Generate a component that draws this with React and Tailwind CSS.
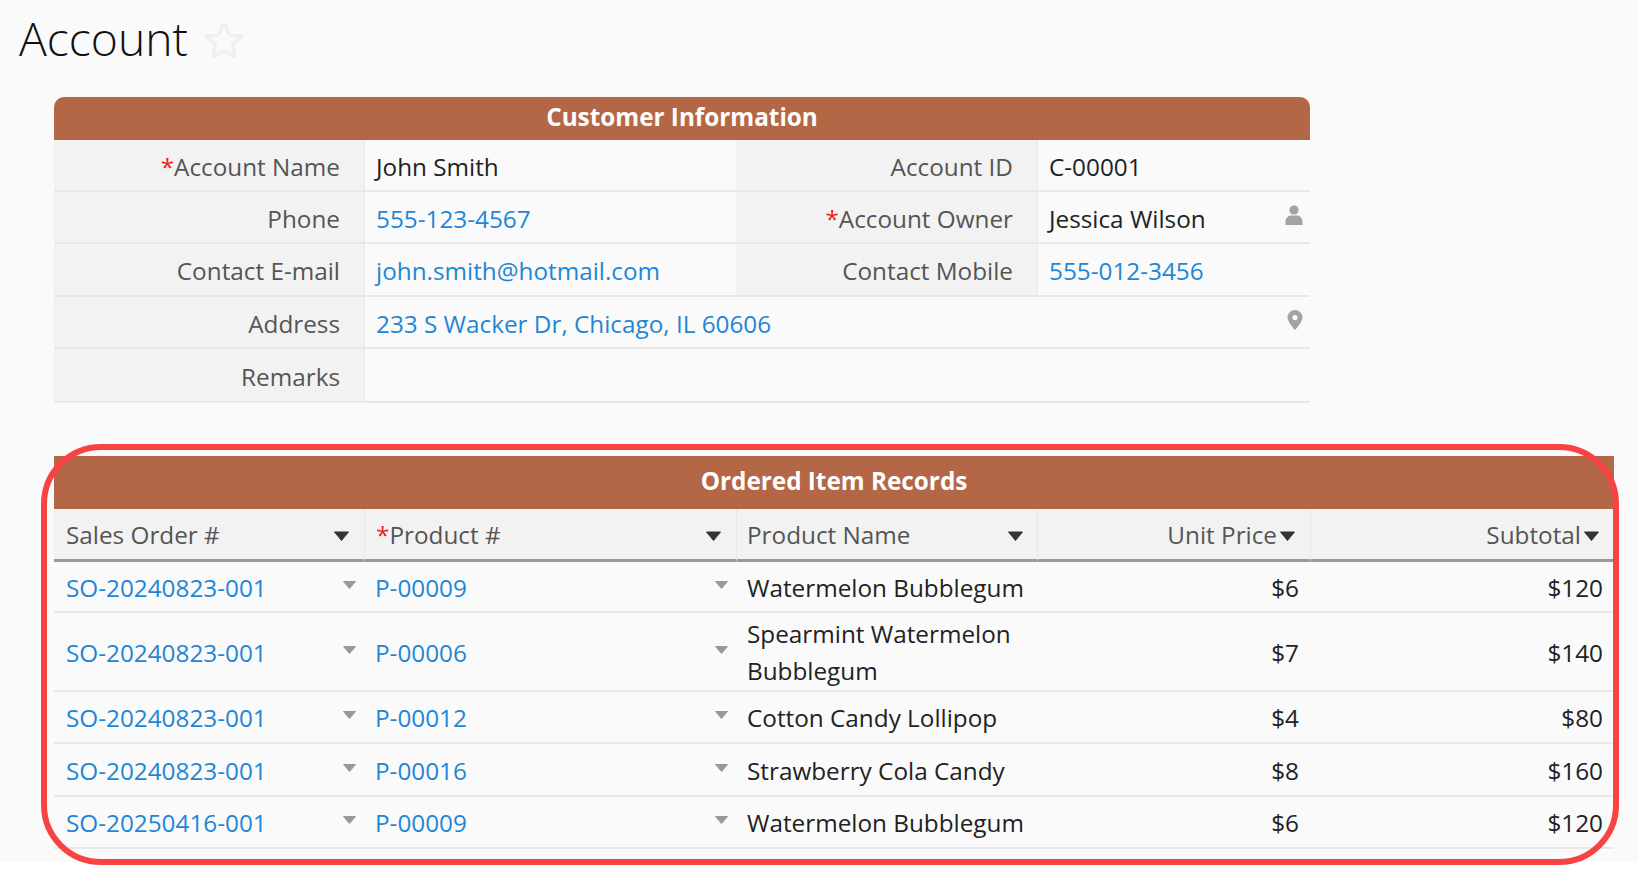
const F = "font-['Open_Sans',sans-serif]";

function Star() {
  return (
    <svg width="44" height="44" viewBox="0 0 24 24" fill="none" stroke="#efefef" strokeWidth="1.7" strokeLinejoin="round">
      <path d="M12 2.500l2.900 6.200 6.700.8-5 4.600 1.400 6.700-6-3.400-6 3.400 1.400-6.700-5-4.600 6.700-.8z" />
    </svg>
  );
}
function Person() {
  return (
    <svg width="18" height="20" viewBox="0 0 18 20" fill="#a3a3a3">
      <circle cx="9" cy="5" r="4.6" />
      <path d="M0.500 20v-3.500c0-3.600 3-6 5.500-6h6c2.500 0 5.500 2.400 5.500 6V20z" />
    </svg>
  );
}
function Pin() {
  return (
    <svg width="16" height="20" viewBox="0 0 16 20">
      <path fillRule="evenodd" fill="#a3a3a3" d="M8 0a7.500 7.500 0 0 0-7.500 7.500C.5 12 8 20 8 20s7.500-8 7.500-12.500A7.500 7.500 0 0 0 8 0zm0 5a2.600 2.600 0 1 1 0 5.200A2.600 2.600 0 0 1 8 5z" />
    </svg>
  );
}
function Caret({ dark }) {
  return dark ? (
    <svg width="15" height="10" viewBox="0 0 15 10" className="shrink-0"><path d="M0.500 1h14L7.500 9.500z" fill="#333" stroke="#333" strokeLinejoin="round" /></svg>
  ) : (
    <svg width="13" height="8" viewBox="0 0 13 8" className="shrink-0"><path d="M0.500 0.500h12L6.500 7.500z" fill="#999" stroke="#999" strokeLinejoin="round" /></svg>
  );
}

const Req = () => <span className="text-[#f01c1c]">*</span>;

function Label({ children }) {
  return (
    <div className="bg-[#f2f2f2] text-[#555] text-right pr-6 pt-[2px] flex items-center justify-end border-b-2 border-[#e8e8e8]">
      <span>{children}</span>
    </div>
  );
}
function Value({ children, link, span, icon }) {
  return (
    <div className={`relative flex items-center pl-[11px] pr-2 pt-[2px] border-b-2 border-l border-[#e8e8e8] ${link ? "text-[#1f86d6]" : "text-[#222]"} ${span ? "col-span-3" : ""}`}>
      <span>{children}</span>
      {icon && <span className="absolute right-[7px] top-[13px] flex">{icon}</span>}
    </div>
  );
}

const rows = [
  ["SO-20240823-001", "P-00009", ["Watermelon Bubblegum"], "$6", "$120", "h-[51px]"],
  ["SO-20240823-001", "P-00006", ["Spearmint Watermelon", "Bubblegum"], "$7", "$140", "h-[79px]"],
  ["SO-20240823-001", "P-00012", ["Cotton Candy Lollipop"], "$4", "$80", "h-[52px]"],
  ["SO-20240823-001", "P-00016", ["Strawberry Cola Candy"], "$8", "$160", "h-[53px]"],
  ["SO-20250416-001", "P-00009", ["Watermelon Bubblegum"], "$6", "$120", "h-[52px]"],
];

const cols = "grid grid-cols-[310px_372px_301px_273px_304px]";

function Head({ children, right, pad }) {
  return (
    <div className={`bg-[#f2f2f2] border-l border-[#e6e6e6] first:border-l-0 border-b-[3px] border-b-[#999] flex items-center text-[#555] ${right ? "justify-end pr-[15px] gap-[3px]" : `justify-between ${pad}`}`}>
      <span>{children}</span>
      <span className="mt-[4px] flex"><Caret dark /></span>
    </div>
  );
}

function LinkCell({ children, pad }) {
  return (
    <div className={`relative flex items-center pt-[1px] ${pad} text-[#1f86d6]`}>
      <span>{children}</span>
      <span className="absolute right-[8px] top-1/2 -translate-y-[calc(50%+2px)] flex"><Caret /></span>
    </div>
  );
}

export default function App() {
  return (
    <div className={`relative w-full h-[881px] bg-white overflow-hidden ${F} text-[24.3px] leading-[37px]`}>
      <div className="h-[862px] bg-[#fafafa]">
        <div className="h-[97px] pl-[19px] pt-[9px] flex items-start">
          <h1 className="text-[46.300px] leading-[60px] font-light text-[#111]">Account</h1>
          <span className="ml-[14px] mt-[10px] flex"><Star /></span>
        </div>

        <div className="ml-[54px] w-[1256px]">
          <div className="h-[43px] pb-[4px] bg-[#b46746] rounded-t-[10px] text-white font-bold flex items-center justify-center">Customer Information</div>
          <div className="grid grid-cols-[310px_372px_301px_273px] grid-rows-[52px_52px_53px_52px_54px]">
            <Label><Req />Account Name</Label>
            <Value>John Smith</Value>
            <Label>Account ID</Label>
            <Value>C-00001</Value>
            <Label>Phone</Label>
            <Value link>555-123-4567</Value>
            <Label><Req />Account Owner</Label>
            <Value icon={<Person />}>Jessica Wilson</Value>
            <Label>Contact E-mail</Label>
            <Value link>john.smith@hotmail.com</Value>
            <Label>Contact Mobile</Label>
            <Value link>555-012-3456</Value>
            <Label>Address</Label>
            <Value link span icon={<Pin />}>233 S Wacker Dr, Chicago, IL 60606</Value>
            <Label>Remarks</Label>
            <Value span></Value>
          </div>
        </div>

        <div className="ml-[54px] mt-[53px] w-[1560px]">
          <div className="h-[53px] pb-[4px] bg-[#b46746] text-white font-bold flex items-center justify-center">Ordered Item Records</div>
          <div className={`${cols} h-[53px]`}>
            <Head pad="pl-[12px] pr-[15px]">Sales Order #</Head>
            <Head pad="pl-[11px] pr-[15px]"><Req />Product #</Head>
            <Head pad="pl-[10px] pr-[14px]">Product Name</Head>
            <Head right>Unit Price</Head>
            <Head right>Subtotal</Head>
          </div>
          {rows.map((r, i) => (
            <div key={i} className={`${cols} ${r[5]} border-b-2 border-[#e8e8e8]`}>
              <LinkCell pad="pl-[12px]">{r[0]}</LinkCell>
              <LinkCell pad="pl-[11px]">{r[1]}</LinkCell>
              <div className="flex flex-col justify-center pt-[1px] pl-[11px] text-[#222]">
                {r[2].map((t) => <span key={t}>{t}</span>)}
              </div>
              <div className="flex items-center justify-end pt-[1px] pr-[11px] text-[#222]">{r[3]}</div>
              <div className="flex items-center justify-end pt-[1px] pr-[11px] text-[#222]">{r[4]}</div>
            </div>
          ))}
        </div>
      </div>
      <div className="absolute left-[41px] top-[444px] w-[1578px] h-[421px] border-[6px] border-[#f94343] rounded-[60px] pointer-events-none" />
    </div>
  );
}
